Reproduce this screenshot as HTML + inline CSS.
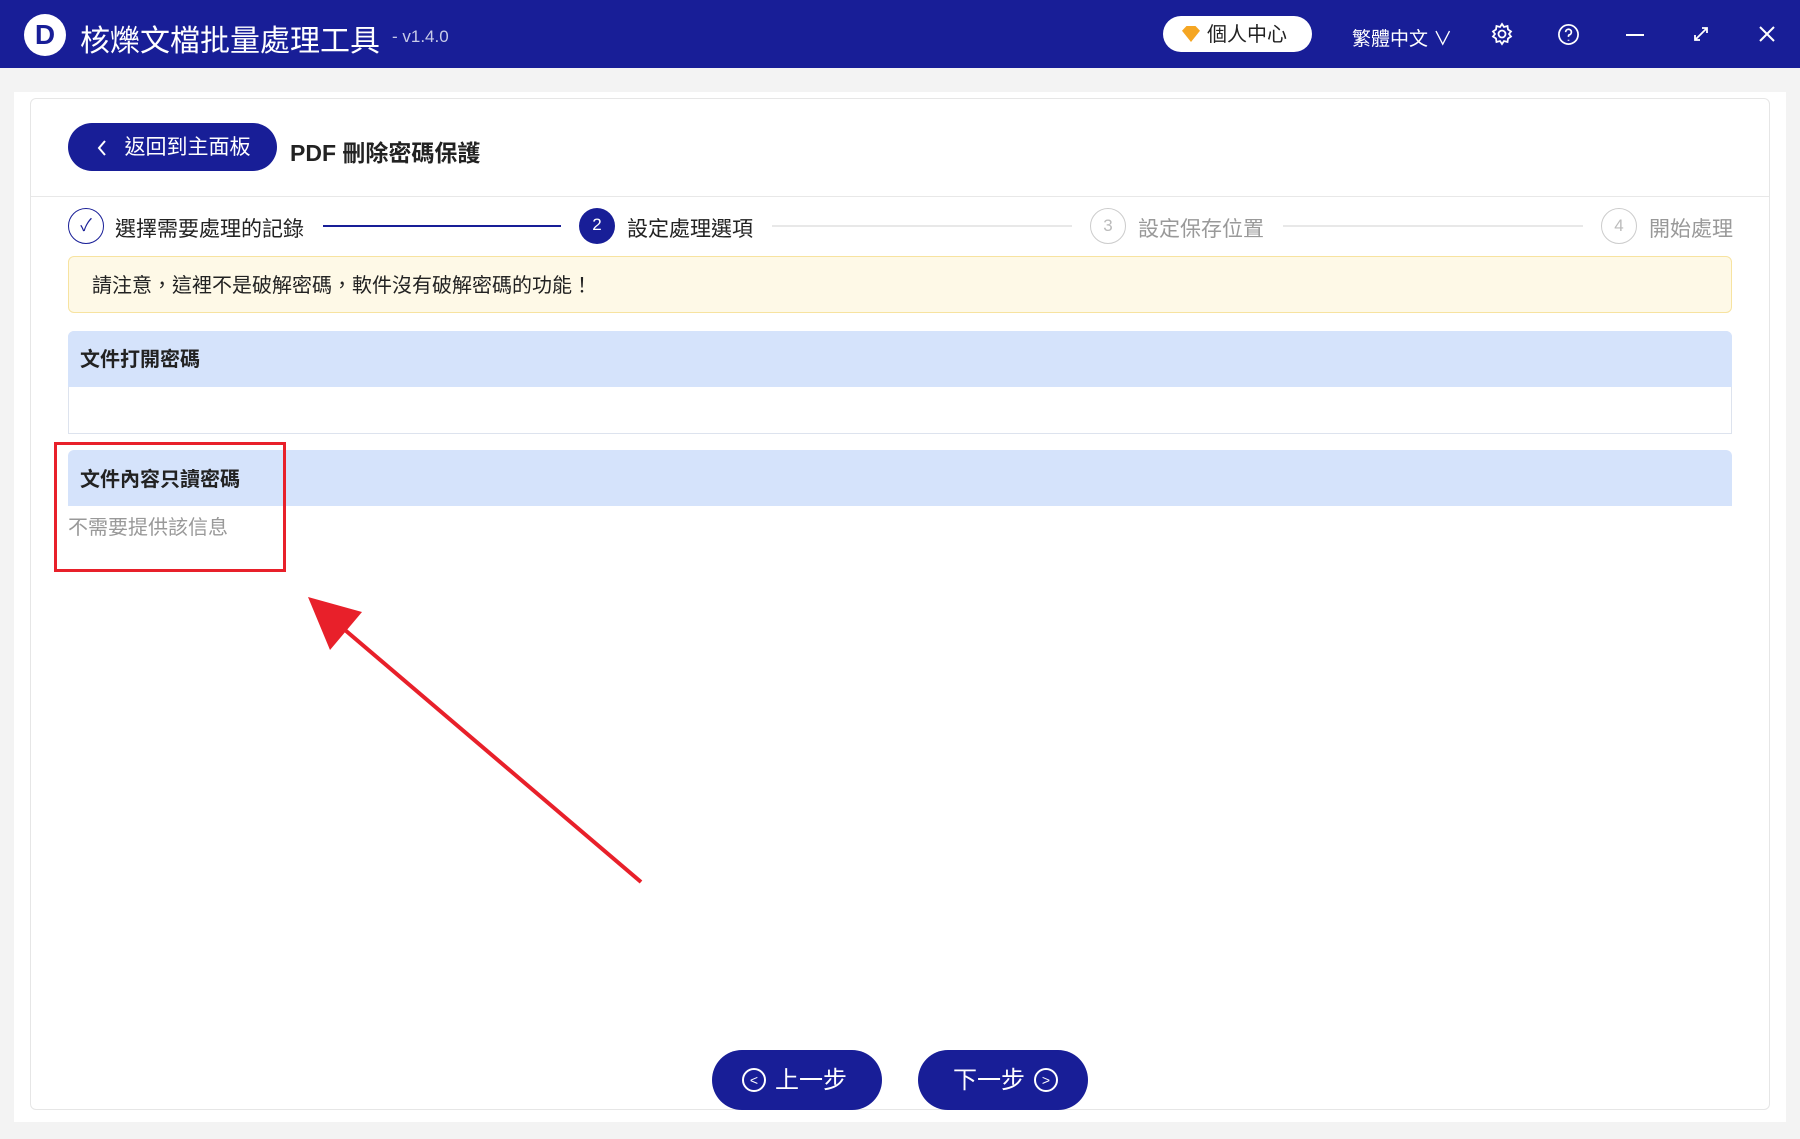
<!DOCTYPE html>
<html><head><meta charset="utf-8"><style>
*{margin:0;padding:0;box-sizing:border-box}
body{width:1800px;height:1139px;overflow:hidden;background:#f3f3f3;font-family:"Liberation Sans","Noto Sans CJK TC",sans-serif;position:relative}
.a{position:absolute}
.top{left:0;top:0;width:1800px;height:68px;background:#181e97;color:#fff}
.card{left:30px;top:98px;width:1740px;height:1012px;background:#fff;border:1px solid #e6e6e6;border-radius:6px}
.step{font-size:21px;color:#222;top:213px}
.circ{width:36px;height:36px;border-radius:50%;top:208px;text-align:center;line-height:34px;font-size:17px}
.btn{background:#181e97;color:#fff;border-radius:30px;font-size:24px;text-align:center;line-height:62px}
</style></head><body>
<div class="a top">
 <div class="a" style="left:24px;top:14px;width:42px;height:42px;border-radius:50%;background:#fff;color:#181e97;font-weight:bold;font-size:28px;text-align:center;line-height:42px">D</div>
 <div class="a" style="left:80px;top:16px;font-size:30px">核爍文檔批量處理工具</div>
 <div class="a" style="left:392px;top:27px;font-size:17px;color:#c8cbe8">- v1.4.0</div>
 <div class="a" style="left:1163px;top:16px;width:149px;height:36px;border-radius:18px;background:#fff;color:#222;font-size:20px;line-height:38px;padding-left:44px">個人中心</div>
 <div class="a" style="left:1182px;top:26px;width:18px;height:16px;background:#f5a623;clip-path:polygon(0 30%,25% 0,75% 0,100% 30%,50% 100%)"></div>
 <div class="a" style="left:1352px;top:24px;font-size:19px">繁體中文 ∨</div>
 <svg class="a" style="left:1490px;top:22px" width="24" height="24" viewBox="0 0 24 24" fill="none" stroke="#fff" stroke-width="1.8"><circle cx="12" cy="12" r="3.5"/><path d="M12 2l2 3 3.5-1 .5 3.5 3 2-2 2.5 2 2.5-3 2-.5 3.5-3.5-1-2 3-2-3-3.5 1-.5-3.5-3-2 2-2.5-2-2.5 3-2 .5-3.5 3.5 1z"/></svg>
 <svg class="a" style="left:1557px;top:23px" width="23" height="23" viewBox="0 0 24 24" fill="none" stroke="#fff" stroke-width="1.8"><circle cx="12" cy="12" r="10"/><path d="M9 9.5a3 3 0 1 1 3.5 3c-.5.2-.5.8-.5 2M12 17.5v1"/></svg>
 <div class="a" style="left:1626px;top:34px;width:18px;height:2px;background:#fff"></div>
 <svg class="a" style="left:1692px;top:25px" width="18" height="18" viewBox="0 0 18 18" stroke="#fff" stroke-width="1.8" fill="none"><path d="M3 15L15 3M10 3h5v5M3 10v5h5"/></svg>
 <svg class="a" style="left:1758px;top:25px" width="18" height="18" viewBox="0 0 18 18" stroke="#fff" stroke-width="2"><path d="M2 2l14 14M16 2L2 16"/></svg>
</div>
<div class="a" style="left:14px;top:92px;width:1772px;height:1030px;background:#fff"></div>
<div class="a card"></div>
<div class="a btn" style="left:68px;top:123px;width:209px;height:48px;line-height:50px;font-size:21px;padding-left:30px">返回到主面板</div>
<svg class="a" style="left:96px;top:139px" width="12" height="18" viewBox="0 0 12 18" stroke="#fff" stroke-width="2" fill="none"><path d="M9 2L3 9l6 7"/></svg>
<div class="a" style="left:290px;top:134px;font-size:23px;font-weight:bold;color:#222">PDF 刪除密碼保護</div>
<div class="a" style="left:31px;top:196px;width:1738px;height:1px;background:#e8e8e8"></div>
<div class="a circ" style="left:68px;border:1.5px solid #181e97;color:#181e97">✓</div>
<div class="a step" style="left:115px">選擇需要處理的記錄</div>
<div class="a" style="left:323px;top:225px;width:238px;height:2px;background:#181e97"></div>
<div class="a circ" style="left:579px;background:#181e97;color:#fff">2</div>
<div class="a step" style="left:627px">設定處理選項</div>
<div class="a" style="left:772px;top:225px;width:300px;height:2px;background:#e8e8e8"></div>
<div class="a circ" style="left:1090px;border:1.5px solid #ccc;color:#bbb">3</div>
<div class="a step" style="left:1138px;color:#999">設定保存位置</div>
<div class="a" style="left:1283px;top:225px;width:300px;height:2px;background:#e8e8e8"></div>
<div class="a circ" style="left:1601px;border:1.5px solid #ccc;color:#bbb">4</div>
<div class="a step" style="left:1649px;color:#999">開始處理</div>
<div class="a" style="left:68px;top:256px;width:1664px;height:57px;background:#fef9e7;border:1px solid #f7e3a0;border-radius:6px;font-size:20px;color:#222;line-height:59px;padding-left:23px">請注意，這裡不是破解密碼，軟件沒有破解密碼的功能！</div>
<div class="a" style="left:68px;top:331px;width:1664px;height:103px;border:1px solid #dde3ee;border-radius:6px 6px 0 0"></div>
<div class="a" style="left:68px;top:331px;width:1664px;height:56px;background:#d5e3fb;border-radius:6px 6px 0 0;font-size:20px;font-weight:bold;color:#222;line-height:58px;padding-left:12px">文件打開密碼</div>
<div class="a" style="left:68px;top:450px;width:1664px;height:56px;background:#d5e3fb;border-radius:6px 6px 0 0;font-size:20px;font-weight:bold;color:#222;line-height:60px;padding-left:12px">文件內容只讀密碼</div>
<div class="a" style="left:68px;top:511px;font-size:20px;color:#999">不需要提供該信息</div>
<div class="a" style="left:54px;top:442px;width:232px;height:130px;border:3px solid #e8202a"></div>
<svg class="a" style="left:0;top:0" width="1800" height="1139"><line x1="641" y1="882" x2="345" y2="630" stroke="#e8202a" stroke-width="4"/><polygon points="308,597 362,612 330,650" fill="#e8202a"/></svg>
<div class="a btn" style="left:712px;top:1050px;width:170px;height:60px;padding-left:28px">上一步</div>
<div class="a" style="left:742px;top:1068px;width:24px;height:24px;border:2px solid #fff;border-radius:50%;color:#fff;font-size:14px;line-height:20px;text-align:center">&lt;</div>
<div class="a btn" style="left:918px;top:1050px;width:170px;height:60px;padding-right:28px">下一步</div>
<div class="a" style="left:1034px;top:1068px;width:24px;height:24px;border:2px solid #fff;border-radius:50%;color:#fff;font-size:14px;line-height:20px;text-align:center">&gt;</div>
</body></html>
